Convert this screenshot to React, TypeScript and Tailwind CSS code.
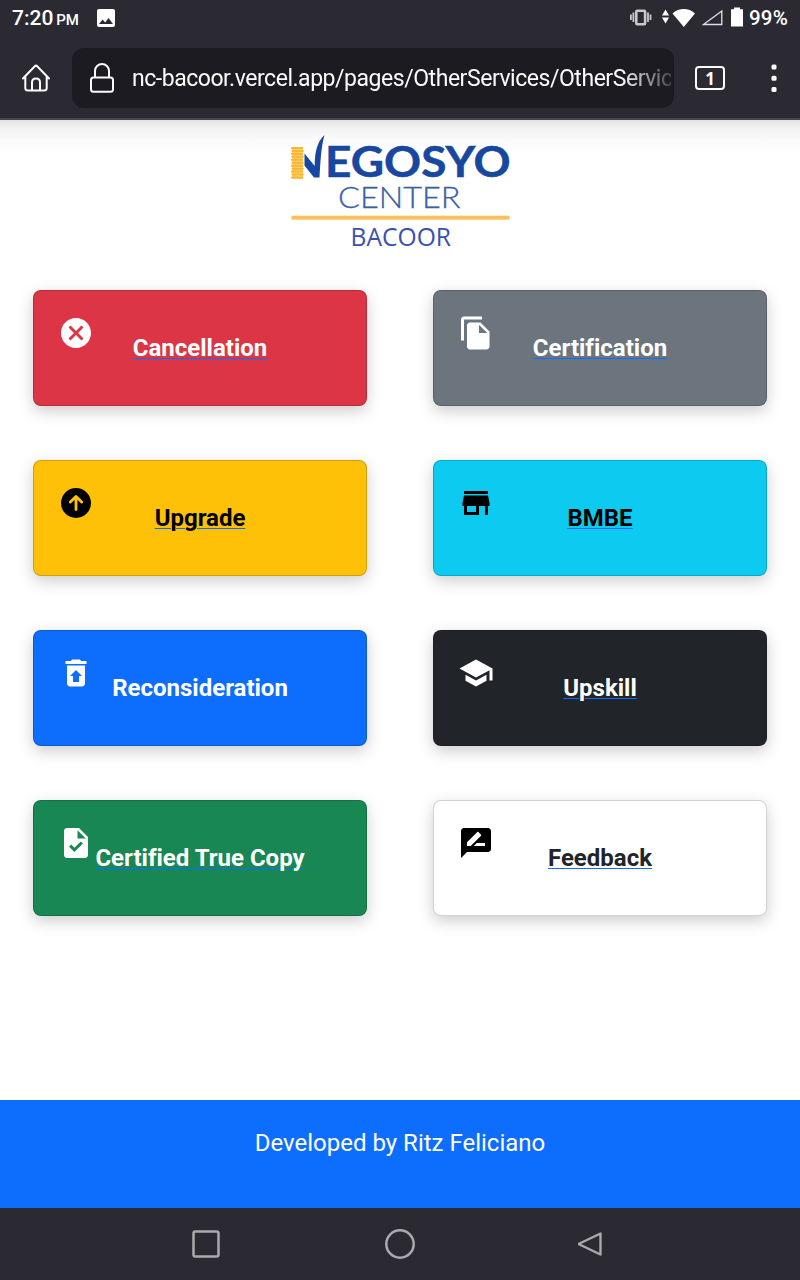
import React from "react";

type Service = {
  label: string;
  card: string;
  text: string;
  icon: React.ReactNode;
  underline?: boolean;
};

const services: Service[] = [
  {
    label: "Cancellation",
    card: "bg-[#dc3545]",
    text: "text-white",
    underline: true,
    icon: (
      <path
        fill="#fff"
        d="M12 2C6.47 2 2 6.47 2 12s4.47 10 10 10 10-4.47 10-10S17.53 2 12 2zm5 13.59L15.59 17 12 13.41 8.41 17 7 15.59 10.59 12 7 8.41 8.41 7 12 10.59 15.59 7 17 8.41 13.41 12 17 15.59z"
      />
    ),
  },
  {
    label: "Certification",
    card: "bg-[#6c757d]",
    text: "text-white",
    underline: true,
    icon: (
      <path
        fill="#fff"
        d="M16 1H4c-1.1 0-2 .9-2 2v14h2V3h12V1zm-1 4l6 6v10c0 1.1-.9 2-2 2H7.99C6.89 23 6 22.1 6 21l.01-14c0-1.1.89-2 1.99-2h7zm-1 7h5.5L14 6.5V12z"
      />
    ),
  },
  {
    label: "Upgrade",
    card: "bg-[#ffc107]",
    text: "text-black",
    underline: true,
    icon: (
      <>
        <circle cx="12" cy="12" r="10" />
        <path
          d="M12 16.4V7.9M8.200 11.400 12 7.600l3.800 3.800"
          fill="none"
          stroke="#ffc107"
          strokeWidth="1.900"
          strokeLinecap="round"
          strokeLinejoin="round"
        />
      </>
    ),
  },
  {
    label: "BMBE",
    card: "bg-[#0dcaf0]",
    text: "text-black",
    underline: true,
    icon: <path d="M20 4H4v2h16V4zm1 10v-2l-1-5H4l-1 5v2h1v6h10v-6h4v6h2v-6h1zm-9 4H6v-4h6v4z" />,
  },
  {
    label: "Reconsideration",
    card: "bg-[#0d6efd]",
    text: "text-white",
    icon: (
      <path
        fill="#fff"
        d="M19 4h-3.5l-1-1h-5l-1 1H5v2h14V4zM6 7v12c0 1.1.9 2 2 2h8c1.1 0 2-.9 2-2V7H6zm8 7v4h-4v-4H8l4-4 4 4h-2z"
      />
    ),
  },
  {
    label: "Upskill",
    card: "bg-[#212529]",
    text: "text-white",
    underline: true,
    icon: (
      <path
        fill="#fff"
        d="M5 13.18v4L12 21l7-3.82v-4L12 17l-7-3.82zM12 3L1 9l11 6 9-4.91V17h2V9L12 3z"
      />
    ),
  },
  {
    label: "Certified True Copy",
    card: "bg-[#198754]",
    text: "text-white",
    underline: true,
    icon: (
      <path
        fill="#fff"
        d="M14 2H6c-1.1 0-1.99.9-1.99 2L4 20c0 1.1.89 2 1.99 2H18c1.1 0 2-.9 2-2V8l-6-6zm-3.06 16L7.4 14.46l1.41-1.41 2.12 2.12 4.24-4.24 1.41 1.41L10.94 18zM13 9V3.5L18.5 9H13z"
      />
    ),
  },
  {
    label: "Feedback",
    card: "bg-white",
    text: "text-[#212529]",
    underline: true,
    icon: (
      <path d="M20 2H4c-1.1 0-1.99.9-1.99 2L2 22l4-4h14c1.1 0 2-.9 2-2V4c0-1.1-.9-2-2-2zM6 14v-2.47l6.88-6.88c.2-.2.51-.2.71 0l1.77 1.77c.2.2.2.51 0 .71L8.47 14H6zm12 0h-7.5l2-2H18v2z" />
    ),
  },
];

function StatusBar() {
  return (
    <div className="flex h-9 items-center justify-between pl-3 pr-3 text-white">
      <div className="flex items-center">
        <span className="text-[21px] leading-9 font-medium">7:20</span>
        <span className="ml-[3px] pt-1 text-[15px] font-medium tracking-[-0.2px]">PM</span>
        <svg className="ml-[18px]" width="18" height="18" viewBox="0 0 18 18">
          <rect width="18" height="18" rx="2" fill="#fff" />
          <path d="M2 15l3.600-4.600 2.500 3L11.600 9 16 15z" fill="#2b2a33" />
        </svg>
      </div>
      <div className="flex items-center">
        <svg width="114" height="24" viewBox="0 0 114 24">
          <g fill="none" stroke="#c9c9cb" strokeWidth="1.800">
            <rect x="6.300" y="4.700" width="8.800" height="13.500" rx="1" strokeWidth="2.600" />
            <path d="M3.400 6.500v9.500M.9 8.500v5.500M18 6.500v9.500M20.500 8.500v5.500" />
          </g>
          <path d="M32 9.500l3.500-6 3.500 6zM32 11.500l3.500 6 3.500-6z" fill="#fff" />
          <path d="M42.500 7.500C49 1.600 58.500 1.600 65 7.500L53.800 21z" fill="#fff" />
          <path d="M73.500 18.500L91.800 5V18.500z" fill="none" stroke="#e0e0e2" strokeWidth="1.300" />
          <path d="M101 3.300h3V1.500h6v1.800h3v17.200h-12z" fill="#fff" />
        </svg>
        <span className="ml-[5px] text-[20.5px] font-medium tracking-[0.2px]">99%</span>
      </div>
    </div>
  );
}

function AddressBar() {
  return (
    <div className="mt-3 flex h-[60px] items-center">
      <div className="flex w-[72px] justify-center">
        <svg width="30" height="30" viewBox="0 0 30 30" fill="none" stroke="#fbfbfe" strokeWidth="2" strokeLinecap="round" strokeLinejoin="round">
          <path d="M2 15.500L13.800 3.200q1.200-1.200 2.400 0L28 15.500M4.300 13.500V25q0 2.500 2.500 2.500h16.400q2.500 0 2.500-2.500V13.500" />
          <path d="M11 27V19.500q0-4 4-4t4 4V27" />
        </svg>
      </div>
      <div className="flex h-[60px] w-[602px] items-center overflow-hidden rounded-xl bg-[#1c1b22] pl-[17px]">
        <svg className="shrink-0" width="26" height="32" viewBox="0 0 26 32" fill="none" stroke="#fbfbfe" strokeWidth="2">
          <rect x="2" y="15.500" width="22" height="14.300" rx="2.500" />
          <path d="M6 15.500V9a7 7 0 0 1 14 0V15.500" />
        </svg>
        <div className="ml-[17px] w-[539px] overflow-hidden whitespace-nowrap pt-[2px] text-[23px] tracking-[-0.46px] text-[#fbfbfe] [mask-image:linear-gradient(to_right,black_490px,transparent_550px)]">
          nc-bacoor.vercel.app/pages/OtherServices/OtherServices
        </div>
      </div>
      <div className="ml-[21px] flex h-6 w-[30px] items-center justify-center rounded-[4px] border-2 border-[#fbfbfe] text-[17px] leading-none font-bold text-[#fbfbfe] [font-family:'Open_Sans',sans-serif]">
        1
      </div>
      <svg className="ml-[46px]" width="6" height="30" viewBox="0 0 6 30" fill="#fbfbfe">
        <rect x="0.500" y="1.500" width="5" height="5" rx="1.500" />
        <rect x="0.500" y="12.700" width="5" height="5" rx="1.500" />
        <rect x="0.500" y="24" width="5" height="5" rx="1.500" />
      </svg>
    </div>
  );
}

function Logo() {
  const coins = Array.from({ length: 11 }, (_, i) => i);
  return (
    <svg width="230" height="120" viewBox="285 131 230 120">
      <rect x="292" y="147" width="11" height="32" fill="#fbd377" />
      {coins.map((i) => (
        <rect key={i} x={i % 2 ? 291.5 : 291} y={147 + i * 2.95} width="12.200" height="2" rx="0.800" fill="#f7b731" />
      ))}
      <path d="M304.500 153.500L314.700 166C314.700 152 317 142 324.500 135C321 147 320.500 162 319.500 177.500H314L304.500 165.500Z" fill="#17479e" />
      <text x="325" y="177.300" fontFamily="Lato" fontWeight="700" fontSize="42.500" textLength="185.500" lengthAdjust="spacingAndGlyphs" fill="#17479e" stroke="#17479e" strokeWidth="0.500">
        EGOSYO
      </text>
      <text x="338" y="207.500" fontFamily="Lato" fontWeight="300" fontSize="28.500" textLength="122.500" lengthAdjust="spacingAndGlyphs" fill="#3a61a5" stroke="#3a61a5" strokeWidth="0.300">
        CENTER
      </text>
      <rect x="291.500" y="215.700" width="218" height="4" fill="#fcbf5c" />
      <text x="350.500" y="245.500" fontFamily="Open Sans" fontSize="25" textLength="100.500" lengthAdjust="spacingAndGlyphs" fill="#3a51ae">
        BACOOR
      </text>
    </svg>
  );
}

function ServiceCard({ label, card, text, icon, underline }: Service) {
  return (
    <div className={`relative flex h-[116px] items-center justify-center rounded-[8px] border border-black/[0.175] shadow-[0_5px_16px_rgba(0,0,0,0.2)] ${card}`}>
      <svg className="absolute left-6 top-6" width="36" height="36" viewBox="0 0 24 24">
        {icon}
      </svg>
      <a
        className={`text-[24px] leading-7 font-bold [font-variant-ligatures:none] ${
          underline ? "[text-decoration:underline_1.4px_#0d6efd] [text-underline-offset:2px]" : ""
        }`}
      >
        <span className={text}>{label}</span>
      </a>
    </div>
  );
}

export default function App() {
  return (
    <div className="flex h-[1280px] w-[800px] flex-col overflow-hidden bg-white font-[Roboto,sans-serif]">
      <header className="h-[120px] shrink-0 border-b-2 border-[#46454f] bg-[#2b2a33]">
        <StatusBar />
        <AddressBar />
      </header>
      <main className="h-[980px] shrink-0 bg-[linear-gradient(to_bottom,#e2e2e2_0px,#f3f3f3_9px,#fbfbfb_20px,#ffffff_34px)]">
        <div className="flex justify-center pt-[11px]">
          <Logo />
        </div>
        <div className="mt-[39px] grid grid-cols-2 gap-x-[66px] gap-y-[54px] px-[33px]">
          {services.map((s) => (
            <ServiceCard key={s.label} {...s} />
          ))}
        </div>
      </main>
      <footer className="h-[108px] shrink-0 bg-[#0d6efd] pt-[25px] text-center text-[24px] leading-9 text-white">
        Developed by Ritz Feliciano
      </footer>
      <nav className="flex h-[72px] shrink-0 items-center justify-between bg-[#2b2a33] px-[190px]">
        <svg width="32" height="32" viewBox="0 0 32 32" fill="none" stroke="#aaaaac" strokeWidth="2.500">
          <rect x="3.500" y="3.500" width="25" height="25" rx="1.800" />
        </svg>
        <svg width="32" height="32" viewBox="0 0 32 32" fill="none" stroke="#aaaaac" strokeWidth="2.500">
          <circle cx="16" cy="16" r="13.700" />
        </svg>
        <svg width="32" height="32" viewBox="0 0 32 32" fill="none" stroke="#aaaaac" strokeWidth="2.400" strokeLinejoin="round">
          <path d="M0.500 16L22.500 5.500V26.500z" />
        </svg>
      </nav>
    </div>
  );
}
